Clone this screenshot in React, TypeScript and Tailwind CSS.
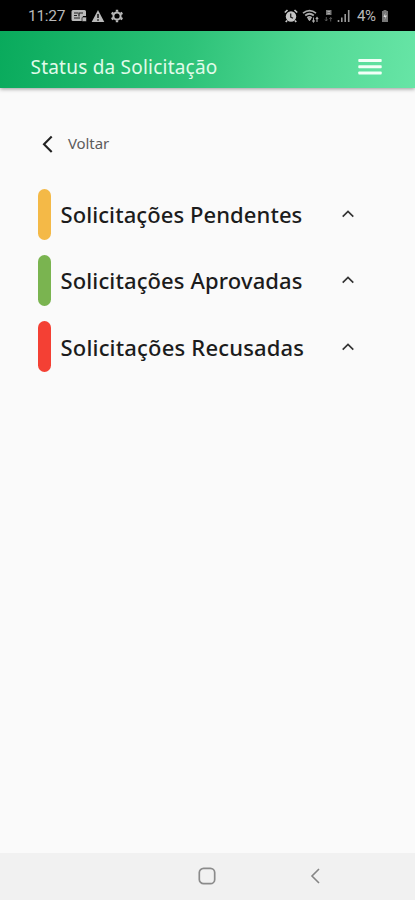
import React from "react";

type Section = { title: string; bar: string; tracking: string };

const sections: Section[] = [
  { title: "Solicitações Pendentes", bar: "bg-[#f4b947]", tracking: "tracking-[0.08px]" },
  { title: "Solicitações Aprovadas", bar: "bg-[#7ab450]", tracking: "tracking-[0.12px]" },
  { title: "Solicitações Recusadas", bar: "bg-[#f44034]", tracking: "tracking-[0.18px]" },
];

function StatusBar() {
  return (
    <div className="flex h-[31px] items-center bg-black pt-[1px] pl-[28px] pr-[26px] text-[#b9b9b9]">
      <span className="w-[38px] whitespace-nowrap pt-[2px] font-['Roboto',sans-serif] text-[15.5px] leading-none tracking-[-0.3px]">11:27</span>
      <svg className="ml-[5px]" width="17" height="14" viewBox="0 0 17 14">
        <path d="M2 1h11.500a1.500 1.500 0 0 1 1.500 1.500V7h-3v5H2A1.500 1.500 0 0 1 .5 10.500v-8A1.500 1.500 0 0 1 2 1z" fill="#b9b9b9" />
        <path d="M3 4h4M3 6.500h3M8 7.500V4h4M3 9h6" stroke="#222" strokeWidth="1.200" fill="none" />
        <rect x="11" y="8" width="4.500" height="4.500" rx="1" fill="#b9b9b9" stroke="#111" strokeWidth=".7" />
      </svg>
      <svg className="ml-[3px]" width="14" height="14" viewBox="0 0 14 14">
        <path d="M7 1 13.300 13H.7z" fill="#b9b9b9" />
        <path d="M7 5v4M7 10.300v1.500" stroke="#111" strokeWidth="1.500" />
      </svg>
      <svg className="ml-[5px]" width="14" height="14" viewBox="0 0 14 14" fill="none" stroke="#b9b9b9">
        <circle cx="7" cy="7" r="3.600" strokeWidth="2" />
        <path d="M7 .8v2M7 11.200v2M1.600 3.900l1.800 1M10.600 9.100l1.800 1M1.600 10.100l1.800-1M10.600 4.900l1.800-1" strokeWidth="2.400" />
      </svg>
      <div className="ml-auto flex items-center">
        <svg width="14" height="14" viewBox="0 0 14 14" fill="none">
          <circle cx="7" cy="7.500" r="5.200" fill="#c4c4c4" />
          <path d="M.8 3.500 3.500 1M10.500 1l2.700 2.500M3 11.500 1.800 13M11 11.500l1.200 1.500" stroke="#c4c4c4" strokeWidth="1.700" />
          <path d="M6.700 4.500V8l2.300 1.300" stroke="#222" strokeWidth="1.300" />
        </svg>
        <svg className="ml-[4px]" width="17" height="14" viewBox="0 0 17 14" fill="none" stroke="#aaa">
          <path d="M1 4.200q6.500-5 13 0M3.200 6.500q4.300-3.500 8.600 0M5.300 8.800q2.200-1.800 4.400 0" strokeWidth="1.700" />
          <path d="m6 9.500 1.500 2.300 1.500-2.300z" fill="#aaa" />
          <path d="M11.500 8.500V13M10.300 11.500l1.200 1.500 1.200-1.500M15 13V8.500M13.800 10 15 8.500l1.200 1.500" strokeWidth="1.100" />
        </svg>
        <svg className="ml-[5px]" width="9" height="14" viewBox="0 0 9 14">
          <rect x="2" y="1" width="5.500" height="5" fill="#777" />
          <path d="M3.500 2.500h2.500M3.500 4.500h2.500" stroke="#bbb" strokeWidth=".8" />
          <path d="M2.300 8v4M1 10.500l1.300 1.500 1.300-1.500M6.700 12.500v-4M5.400 10l1.300-1.500L8 10" stroke="#555" fill="none" />
        </svg>
        <svg className="ml-[4px]" width="13" height="14" viewBox="0 0 13 14" stroke="#999" strokeWidth="1.600">
          <path d="M1.500 13v-2M4.800 13V8.500M8.200 13V5M11.700 13V1" />
        </svg>
        <span className="ml-[7px] w-[22px] whitespace-nowrap pt-[1px] font-['Roboto',sans-serif] text-[15px] leading-none tracking-[-0.4px]">4%</span>
        <svg className="ml-[2px]" width="8" height="14" viewBox="0 0 8 14">
          <path d="M2.500 1h3v1H7v11H1V2h1.500z" fill="#777" />
          <path d="M4.500 3.500 2.500 8h2L3.500 11 6 6.500H4z" fill="#ddd" />
        </svg>
      </div>
    </div>
  );
}

export default function App() {
  return (
    <div className="flex h-[900px] w-[415px] flex-col overflow-hidden bg-[#fafafa] font-['Noto_Sans',sans-serif]">
      <StatusBar />
      <header className="z-10 flex h-[57px] items-center justify-between bg-linear-[100deg,#09aa5c,#2dc278_45%,#53d995_75%,#67e5a6] pl-[30.5px] pr-[33px] pt-[15px] shadow-[0_1px_4px_rgba(0,0,0,0.4)]">
        <h1 className="whitespace-nowrap text-[19px] leading-none tracking-[0.22px] text-[#e0fbea]">Status da Solicitação</h1>
        <svg width="24" height="18" viewBox="0 0 24 18" fill="#f2fff7">
          <rect x=".3" y="1" width="23.400" height="3" rx=".8" />
          <rect x=".3" y="7.200" width="23.400" height="3" rx=".8" />
          <rect x=".3" y="13.500" width="23.400" height="3" rx=".8" />
        </svg>
      </header>
      <main className="flex-1 pl-[38px] pr-[60px] pt-[45.500px]">
        <button className="flex h-5 items-center pl-[4px]">
          <svg width="12" height="18" viewBox="0 0 12 18" fill="none" stroke="#222" strokeWidth="2.100">
            <path d="M9.700 1.600 2 9.300 9.700 17" />
          </svg>
          <span className="ml-[14px] whitespace-nowrap text-[15px] leading-none tracking-[-0.1px] text-[#5c5c5c]">Voltar</span>
        </button>
        <div className="mt-[35.200px] flex flex-col gap-[15.200px]">
          {sections.map((s) => (
            <div key={s.title} className="flex h-[51px] items-center">
              <div className={`h-[51px] w-[12.500px] rounded-full ${s.bar}`} />
              <h2 className={`ml-[10px] whitespace-nowrap text-[22px] font-medium leading-none text-[#1c1c1c] ${s.tracking}`}>{s.title}</h2>
              <svg className="ml-auto mr-[1px]" width="12" height="8" viewBox="0 0 12 8" fill="none" stroke="#333" strokeWidth="1.700">
                <path d="M.7 6.600 6 1.500l5.300 5.100" />
              </svg>
            </div>
          ))}
        </div>
      </main>
      <nav className="flex h-[47px] items-center bg-[#f1f1f1] pb-[1px] pl-[198px]">
        <svg width="18" height="18" viewBox="0 0 18 18" fill="none" stroke="#8b8b8b" strokeWidth="1.700">
          <rect x="1.300" y="1.300" width="15.400" height="15.400" rx="4.300" />
        </svg>
        <svg className="ml-[94px]" width="11" height="16" viewBox="0 0 11 16" fill="none" stroke="#858585" strokeWidth="1.600">
          <path d="M9 1 2 8l7 7" />
        </svg>
      </nav>
    </div>
  );
}
